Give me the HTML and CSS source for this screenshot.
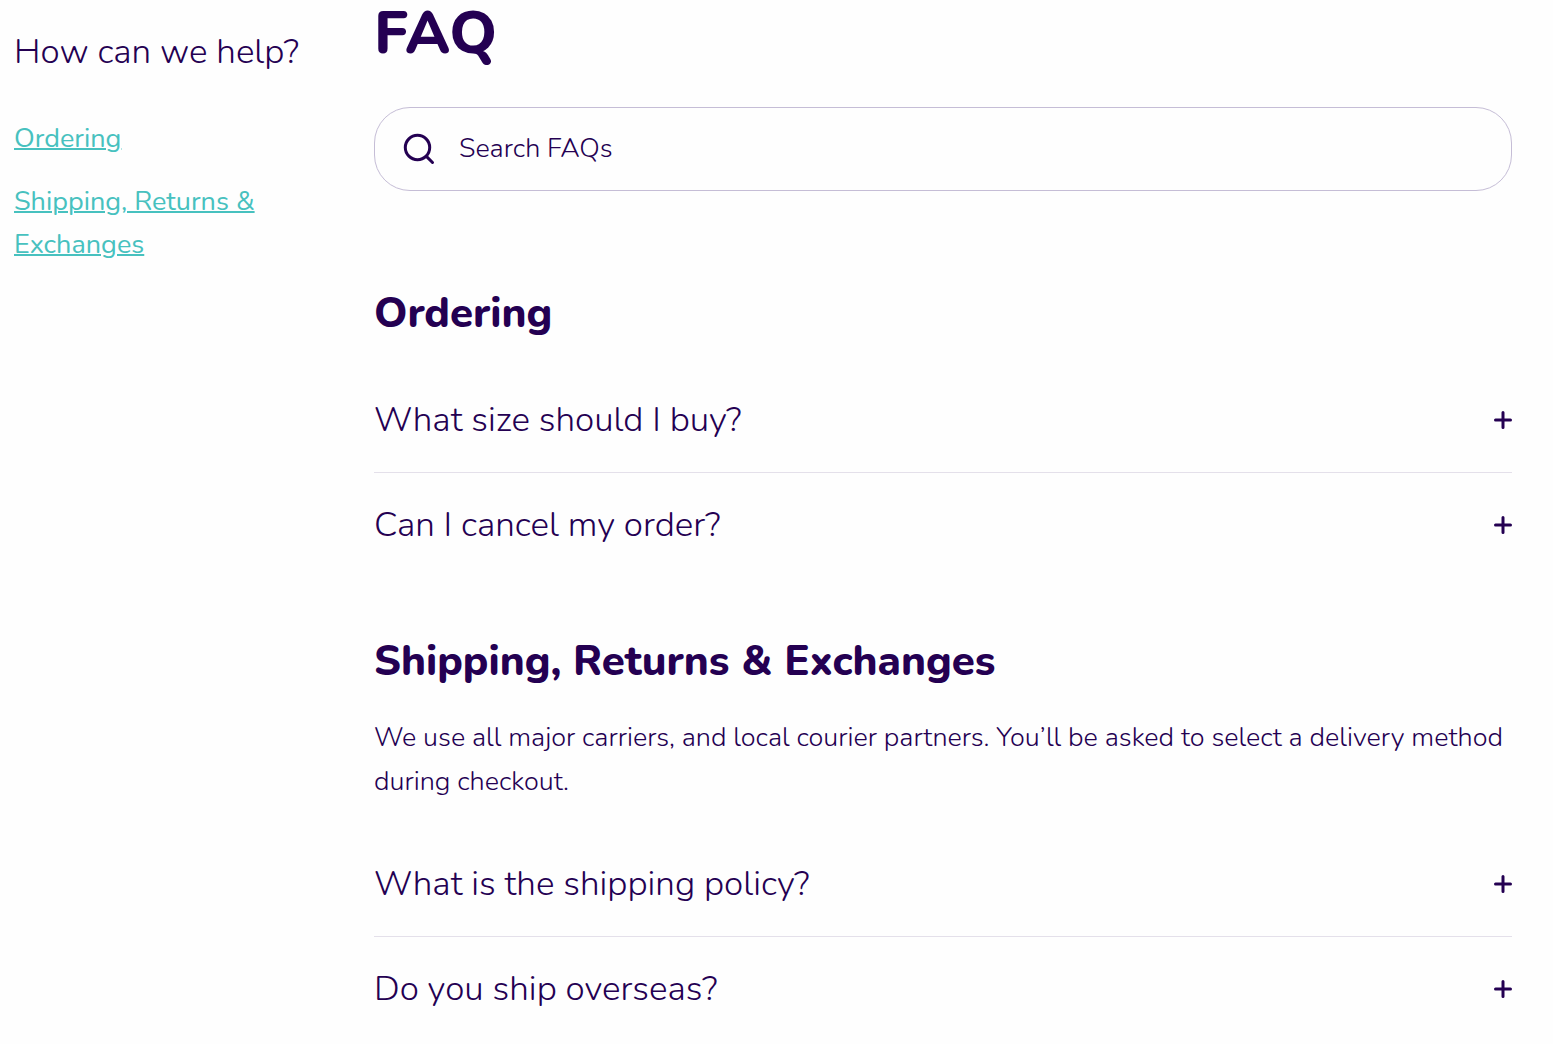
FILE: index.html
```html
<!DOCTYPE html>
<html lang="en">
<head>
    <meta charset="UTF-8">
    <meta name="viewport" content="width=device-width, initial-scale=1.0">
    <title>FAQ</title>
    <link rel="stylesheet" href="styles.css">
</head>
<body>

    <div class="page">
        <aside class="sidebar">
            <h2 class="sidebar-title">How can we help?</h2>
            <nav class="sidebar-nav">
                <a href="#ordering">Ordering</a>
                <a href="#shipping">Shipping, Returns &amp; Exchanges</a>
            </nav>
        </aside>

        <main class="content">
            <h1>FAQ</h1>

            <form class="search" role="search">
                <label for="search">
                    <svg class="search-icon" viewBox="0 0 32 32" aria-label="Search">
                        <circle cx="14.5" cy="14.5" r="12.2"/>
                        <path d="M23.4 23.4L29.5 29.5"/>
                    </svg>
                </label>
                <input type="text" id="search" name="search" placeholder="Search FAQs">
            </form>

            <section class="faq-section" id="ordering">
                <h2>Ordering</h2>
                <div class="questions">
                    <button type="button" class="question">
                        What size should I buy?
                        <svg class="plus" viewBox="0 0 18 18"><path d="M9 1.5V16.5M1.5 9H16.5"/></svg>
                    </button>
                    <button type="button" class="question">
                        Can I cancel my order?
                        <svg class="plus" viewBox="0 0 18 18"><path d="M9 1.5V16.5M1.5 9H16.5"/></svg>
                    </button>
                </div>
            </section>

            <section class="faq-section" id="shipping">
                <h2>Shipping, Returns &amp; Exchanges</h2>
                <p>We use all major carriers, and local courier partners. You’ll be asked to select a delivery method during checkout.</p>
                <div class="questions">
                    <button type="button" class="question">
                        What is the shipping policy?
                        <svg class="plus" viewBox="0 0 18 18"><path d="M9 1.5V16.5M1.5 9H16.5"/></svg>
                    </button>
                    <button type="button" class="question">
                        Do you ship overseas?
                        <svg class="plus" viewBox="0 0 18 18"><path d="M9 1.5V16.5M1.5 9H16.5"/></svg>
                    </button>
                </div>
            </section>
        </main>
    </div>

</body>
</html>
```
FILE: styles.css
```css
* {
    margin: 0;
    padding: 0;
    box-sizing: border-box;
}

body {
    background: #fefefe;
    font-family: Nunito, Lato, sans-serif;
    font-size: 27px;
    font-weight: 300;
    line-height: 44px;
    color: #240052;
}

.page {
    display: flex;
    gap: 60px;
    padding: 0 41px 0 14px;
}

/* Left column */
.sidebar {
    flex: 0 0 300px;
    padding-top: 28px;
}

.sidebar-title {
    font-size: 35px;
    font-weight: 300;
    line-height: 48px;
    margin-bottom: 41px;
}

.sidebar-nav {
    display: flex;
    flex-direction: column;
    align-items: flex-start;
    gap: 20px;
    line-height: 43px;
}

.sidebar-nav a {
    color: #47c1bf;
    font-weight: 400;
    text-decoration: underline;
    text-decoration-thickness: 2px;
}

/* Right column */
.content {
    flex: 1;
    min-width: 0;
}

h1 {
    font-size: 60px;
    font-weight: 800;
    line-height: 67px;
    margin-bottom: 40px;
}

.search {
    display: flex;
    align-items: center;
    gap: 24px;
    height: 84px;
    padding: 0 28px;
    border: 1px solid #c5bdd6;
    border-radius: 36px;
    margin-bottom: 97px;
}

.search label {
    display: flex;
}

.search-icon {
    width: 32px;
    height: 32px;
    fill: none;
    stroke: #240052;
    stroke-width: 3;
    stroke-linecap: round;
}

.search input {
    flex: 1;
    border: none;
    outline: none;
    background: none;
    font: inherit;
    color: inherit;
}

.search input::placeholder {
    color: inherit;
    opacity: 1;
}

.faq-section {
    margin-bottom: 59px;
}

.faq-section:last-child {
    margin-bottom: 0;
}

.faq-section h2 {
    font-size: 42px;
    font-weight: 800;
    line-height: 52px;
    margin-bottom: 28px;
}

.faq-section p {
    margin-bottom: 28px;
}

.question {
    display: flex;
    align-items: center;
    justify-content: space-between;
    width: 100%;
    padding: 28px 0;
    border: none;
    background: none;
    font: inherit;
    font-size: 35px;
    line-height: 48px;
    color: inherit;
    text-align: left;
    cursor: pointer;
}

.question + .question {
    border-top: 1px solid #e4e0ea;
}

.plus {
    flex-shrink: 0;
    width: 18px;
    height: 18px;
    fill: none;
    stroke: #240052;
    stroke-width: 3;
    stroke-linecap: round;
}

@media (max-width: 900px) {
    .page {
        flex-direction: column;
        gap: 30px;
        padding: 0 14px;
    }

    .sidebar {
        flex: none;
    }
}
```
